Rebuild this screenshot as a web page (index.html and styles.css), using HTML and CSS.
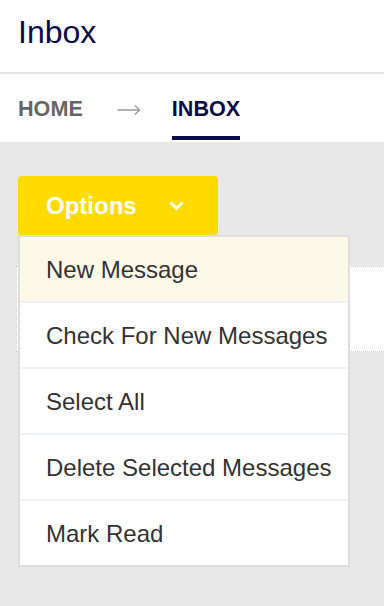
FILE: index.html
```html
<!DOCTYPE html>
<html>
<head>
<meta charset="utf-8">
<link rel="stylesheet" href="styles.css">
</head>
<body>
<header class="header">
  <h1 class="title">Inbox</h1>
</header>
<nav class="crumbs">
  <span class="crumb">HOME</span>
  <span class="arrow" aria-label="→"><svg width="24" height="12" viewBox="0 0 24 12"><path d="M0.5 6H22.5M18 1.5L22.5 6L18 10.5" fill="none" stroke="#9a9a9a" stroke-width="1.4"/></svg></span>
  <span class="crumb active">INBOX</span>
</nav>
<main class="main">
  <div class="dropdown">
    <button class="btn">
      <span>Options</span>
      <svg class="chev" width="15" height="10" viewBox="0 0 15 10"><polyline points="1.5,1.5 7.5,7.5 13.5,1.5" fill="none" stroke="#fff" stroke-width="3"/></svg>
    </button>
    <ul class="menu">
      <li class="item hl">New Message</li>
      <li class="item">Check For New Messages</li>
      <li class="item">Select All</li>
      <li class="item">Delete Selected Messages</li>
      <li class="item">Mark Read</li>
    </ul>
  </div>
  <div class="card"></div>
</main>
</body>
</html>
```

FILE: styles.css
```css
html, body {
  margin: 0;
  padding: 0;
  height: 606px;
  overflow: hidden;
  font-family: "Liberation Sans", Arial, sans-serif;
  background: #e8e8e8;
}
.header {
  background: #fff;
  height: 56px;
  padding: 16px 18px 0;
  border-bottom: 2px solid #e4e4e4;
}
.title {
  margin: 0;
  font-size: 32px;
  line-height: 32px;
  font-weight: normal;
  color: #0b0a4c;
}
.crumbs {
  background: #fff;
  display: flex;
  align-items: flex-start;
  padding: 23.5px 18px 2px;
  font-size: 21.6px;
  line-height: 22px;
  font-weight: bold;
}
.crumb {
  color: #666;
  padding-bottom: 16.5px;
  border-bottom: 4px solid transparent;
}
.crumb.active {
  color: #0b0a4c;
  border-bottom-color: #0b0a4c;
}
.arrow {
  display: flex;
  align-items: center;
  height: 22px;
  margin: 0 31px 0 34px;
  padding-top: 2px;
  box-sizing: border-box;
}
.main {
  padding: 34px 0 0 18px;
}
.dropdown {
  position: relative;
  z-index: 2;
  width: 200px;
}
.btn {
  display: flex;
  align-items: center;
  width: 200px;
  height: 59px;
  padding: 0 0 0 28px;
  border: 0;
  border-radius: 4px;
  background: #ffdb00;
  color: #fff;
  font-family: "Liberation Sans", Arial, sans-serif;
  font-size: 24px;
  font-weight: bold;
  line-height: 59px;
}
.chev {
  margin-left: 32px;
  margin-top: 1px;
}
.menu {
  position: absolute;
  top: 59px;
  left: 0;
  width: 328px;
  margin: 0;
  padding: 0;
  list-style: none;
  background: #fff;
  border: 2px solid #dedede;
}
.item {
  height: 64px;
  line-height: 66px;
  padding-left: 26px;
  font-size: 24px;
  color: #333;
  border-bottom: 2px solid #eef2f5;
  box-sizing: content-box;
  overflow: hidden;
}
.item:last-child {
  border-bottom: 0;
}
.item.hl {
  background: #fdf9e9;
}
.card {
  margin: 31px 0 0 -2px;
  height: 84px;
  background: #fff;
  border: 1px dotted #cfcfcf;
  border-right: 0;
  position: relative;
  z-index: 1;
}
```
